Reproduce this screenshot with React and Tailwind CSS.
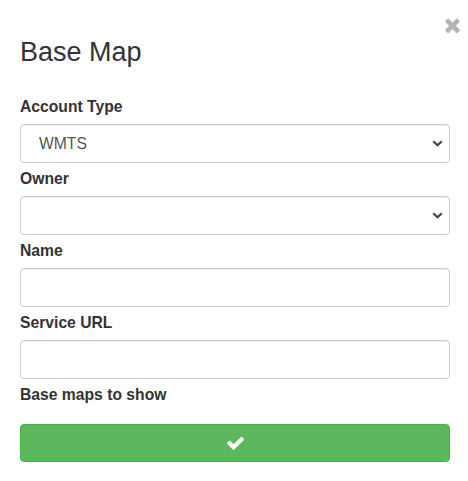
function Label({ children }) {
  return <label className="block h-[33px] pt-[5px] text-[15.7px] leading-[22px] font-bold text-[#333]">{children}</label>
}

const fieldClass =
  'block h-[39px] w-full rounded border border-[#ccc] bg-white px-[18px] text-[15.7px] text-[#555] shadow-[inset_0_1px_1px_rgba(0,0,0,0.075)] outline-none'

function Select({ children, defaultValue }) {
  return (
    <div className="relative">
      <select className={`${fieldClass} appearance-none`} defaultValue={defaultValue}>
        {children}
      </select>
      <svg className="pointer-events-none absolute top-[16px] right-[7px] h-[7px] w-[11px]" viewBox="0 0 11 7" fill="none">
        <path d="M1.2 1.2 5.5 5.2 9.8 1.2" stroke="#444" strokeWidth="2.2" />
      </svg>
    </div>
  )
}

export default function App() {
  return (
    <div className="relative h-[481px] w-[468px] bg-white pt-[34px] pr-[18px] pl-5 font-['Liberation_Sans',Arial,sans-serif] text-[#333]">
      <button className="absolute top-[17px] right-[8px] block text-[#b3b3b3]">
        <svg className="block h-4 w-[15px]" viewBox="302 238 1188 1316" fill="currentColor">
          <path d="M1490 1322q0 40-28 68l-136 136q-28 28-68 28t-68-28l-294-294-294 294q-28 28-68 28t-68-28l-136-136q-28-28-28-68t28-68l294-294-294-294q-28-28-28-68t28-68l136-136q28-28 68-28t68 28l294 294 294-294q28-28 68-28t68 28l136 136q28 28 28 68t-28 68l-294 294 294 294q28 28 28 68z" />
        </svg>
      </button>
      <h1 className="text-[27px] leading-[37px] font-normal">Base Map</h1>
      <form className="mt-[20px]">
        <Label>Account Type</Label>
        <Select defaultValue="WMTS">
          <option>WMTS</option>
        </Select>
        <Label>Owner</Label>
        <Select>
          <option></option>
        </Select>
        <Label>Name</Label>
        <input type="text" className={fieldClass} />
        <Label>Service URL</Label>
        <input type="text" className={fieldClass} />
        <Label>Base maps to show</Label>
        <button
          type="button"
          className="mt-[12px] flex h-[38px] w-full items-center justify-center rounded border border-[#4cae4c] bg-[#5cb85c] text-white"
        >
          <svg className="h-[14px] w-[17px]" viewBox="121 270 1550 1252" fill="currentColor">
            <path d="M1671 566q0 40-28 68l-724 724-136 136q-28 28-68 28t-68-28l-136-136-362-362q-28-28-28-68t28-68l136-136q28-28 68-28t68 28l294 295 656-657q28-28 68-28t68 28l136 136q28 28 28 68z" />
          </svg>
        </button>
      </form>
    </div>
  )
}
